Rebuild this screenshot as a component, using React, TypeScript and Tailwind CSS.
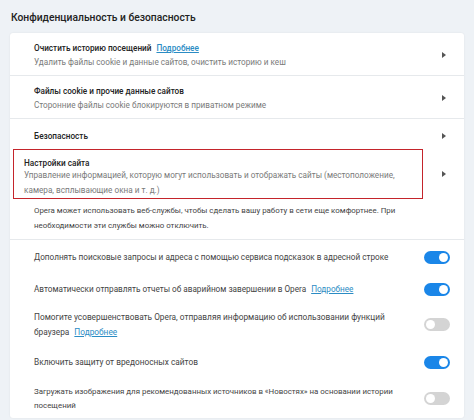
import { ReactNode } from "react";

function Arrow() {
  return (
    <svg width="4" height="6" viewBox="0 0 4 6" className="shrink-0">
      <path d="M0 0 L4 3 L0 6 Z" fill="#555" />
    </svg>
  );
}

function Toggle({ on }: { on: boolean }) {
  return (
    <div
      className={`w-[26px] h-[13px] rounded-full shrink-0 flex items-center px-[2px] ${
        on ? "bg-[#1a86e8] justify-end" : "bg-[#d4d4d4] justify-start"
      }`}
    >
      <div className="w-[9px] h-[9px] rounded-full bg-white" />
    </div>
  );
}

function Link() {
  return <span className="text-[#2b8cc4] underline ml-[5px]">Подробнее</span>;
}

function NavRow({ title, sub, link }: { title: string; sub?: ReactNode; link?: boolean }) {
  return (
    <div className="flex justify-between pl-[24px] pr-[18px] pt-[9px] border-b border-[#e6e9ec] h-[43px]">
      <div>
        <div className="text-[#222] font-medium text-[8.2px] leading-[13px]">
          {title}
          {link && <Link />}
        </div>
        {sub && <div className="text-[#7a7a7a] text-[8.2px] leading-[14px]">{sub}</div>}
      </div>
      <div className="pt-[10px]">
        <Arrow />
      </div>
    </div>
  );
}

function ToggleRow({
  children,
  on,
  h,
  size,
}: {
  children: ReactNode;
  on: boolean;
  h: string;
  size: string;
}) {
  return (
    <div className={`flex items-center justify-between pl-[24px] pr-[14px] ${h}`}>
      <div className={`text-[#444] whitespace-nowrap ${size}`}>{children}</div>
      <Toggle on={on} />
    </div>
  );
}

export default function App() {
  return (
    <div
      className="w-[474px] h-[420px] overflow-hidden bg-[#eef2f6] text-[8.2px] leading-[14px]"
      style={{ fontFamily: 'Roboto, "Noto Sans", sans-serif' }}
    >
      <h1 className="text-[10.3px] font-medium text-[#222] pl-[11px] pt-[11px] h-[33px]">
        Конфиденциальность и безопасность
      </h1>
      <div className="mx-[10px] bg-white rounded-[3px] shadow-[0_0_2px_rgba(0,0,0,0.08)]">
        <NavRow
          title="Очистить историю посещений"
          link
          sub="Удалить файлы cookie и данные сайтов, очистить историю и кеш"
        />
        <NavRow
          title="Файлы cookie и прочие данные сайтов"
          sub="Сторонние файлы cookie блокируются в приватном режиме"
        />
        <div className="flex items-center justify-between pl-[24px] pr-[18px] pt-[3px] h-[30px]">
          <div className="text-[#222] font-medium text-[8.2px]">Безопасность</div>
          <Arrow />
        </div>
        <div className="flex items-center justify-between pl-[3px] pr-[18px]">
          <div className="border-[1.5px] border-[#c4242b] pl-[10px] pr-[8px] pt-[8px] w-[410px] h-[50px]">
            <div className="text-[#222] font-medium text-[8.2px] leading-[10px]">Настройки сайта</div>
            <div className="text-[#7a7a7a] text-[8.2px] leading-[15px] whitespace-nowrap">
              Управление информацией, которую могут использовать и отображать сайты (местоположение,
              <br />
              камера, всплывающие окна и т. д.)
            </div>
          </div>
          <Arrow />
        </div>
        <div className="pl-[24px] pt-[4px] pb-[6px] text-[#444] text-[7.9px] leading-[15px] whitespace-nowrap border-b border-[#e6e9ec]">
          Opera может использовать веб-службы, чтобы сделать вашу работу в сети еще комфортнее. При
          <br />
          необходимости эти службы можно отключить.
        </div>
        <ToggleRow on h="h-[34px]" size="text-[8.2px] leading-[15px]">
          Дополнять поисковые запросы и адреса с помощью сервиса подсказок в адресной строке
        </ToggleRow>
        <ToggleRow on h="h-[30px]" size="text-[8.2px] leading-[15px]">
          Автоматически отправлять отчеты об аварийном завершении в Opera
          <Link />
        </ToggleRow>
        <ToggleRow on={false} h="h-[41px]" size="text-[8.3px] leading-[15px]">
          Помогите усовершенствовать Opera, отправляя информацию об использовании функций
          <br />
          браузера
          <Link />
        </ToggleRow>
        <ToggleRow on h="h-[34px]" size="text-[8.3px] leading-[15px]">
          Включить защиту от вредоносных сайтов
        </ToggleRow>
        <ToggleRow on={false} h="h-[39px]" size="text-[7.9px] leading-[14px]">
          Загружать изображения для рекомендованных источников в «Новостях» на основании истории
          <br />
          посещений
        </ToggleRow>
      </div>
    </div>
  );
}
